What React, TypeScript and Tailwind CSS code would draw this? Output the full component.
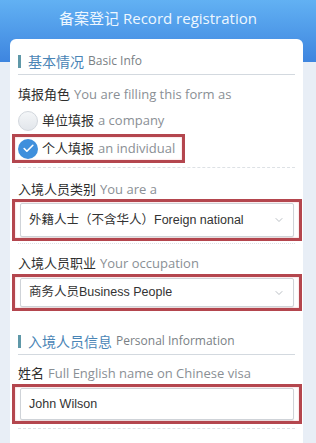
import { Check, ChevronDown } from "lucide-react";

const sans = { fontFamily: '"Open Sans", "Noto Sans CJK SC", sans-serif' };
const arial = { fontFamily: '"Liberation Sans", "Noto Sans CJK SC", sans-serif' };

function SectionHeader({ zh, en, className = "" }: { zh: string; en: string; className?: string }) {
  return (
    <div className={`flex items-end border-b border-[#d3d9df] pb-[2px] ${className}`}>
      <div className="flex h-[22px] items-center">
        <span className="mr-[7px] h-[13px] w-[3px] bg-[#5f98a8]" />
        <span className="text-[14px] text-[#4a85b6]">{zh}</span>
        <span className="ml-[4px] text-[12px] text-[#7a7f85]">{en}</span>
      </div>
    </div>
  );
}

function Label({ zh, en, className = "" }: { zh: string; en: string; className?: string }) {
  return (
    <div className={`flex h-[18px] items-center text-[13px] ${className}`}>
      <span className="text-[#2e2e2e]">{zh}</span>
      <span className="ml-[4px] text-[13px] text-[#8a8f95]">{en}</span>
    </div>
  );
}

function Highlight({ children, className = "" }: { children: React.ReactNode; className?: string }) {
  return (
    <div className={`border-[3px] border-[#b4464e] shadow-[inset_0_0_2px_#f0b8bb] ${className}`}>{children}</div>
  );
}

function Select({ value, className = "" }: { value: string; className?: string }) {
  return (
    <div
      className={`flex items-center justify-between rounded-[2px] border border-[#cfd3d8] bg-white pl-[8px] pr-[8px] shadow-[0_1px_1px_rgba(0,0,0,0.08)] ${className}`}
    >
      <span className="text-[12.5px] text-[#333]" style={arial}>
        {value}
      </span>
      <ChevronDown className="h-[12px] w-[12px] text-[#a3a9b0]" strokeWidth={1.5} />
    </div>
  );
}

function Dashed({ className = "" }: { className?: string }) {
  return <div className={`border-b border-dashed border-[#dde1e5] ${className}`} />;
}

export default function App() {
  return (
    <div className="relative h-[443px] w-[316px] overflow-hidden bg-[#e8eef6]" style={sans}>
      <div className="h-[62px] bg-gradient-to-b from-[#62b1f3] to-[#3e85df] pt-[7px] text-center">
        <h1 className="text-[15px] text-[#eef7ff]">备案登记 Record registration</h1>
      </div>

      <div className="-mt-[23px] ml-[10px] w-[293px] rounded-t-[6px] bg-white pb-4">
        <div className="px-[8px]">
          <SectionHeader zh="基本情况" en="Basic Info" className="h-[36px]" />

          <Label zh="填报角色" en="You are filling this form as" className="mt-[11px]" />

          <div className="mt-[6px] flex h-[22px] items-center">
            <span className="h-[20px] w-[20px] rounded-full border border-[#d2d7dd] bg-gradient-to-b from-[#f4f6f8] to-[#e2e6eb]" />
            <span className="ml-[4px] text-[13px] text-[#2e2e2e]">单位填报</span>
            <span className="ml-[4px] text-[13px] text-[#8a8f95]">a company</span>
          </div>

          <Highlight className="-ml-[6px] mt-[2px] flex h-[29px] w-[173px] items-center pl-[3px]">
            <span className="flex h-[20px] w-[20px] items-center justify-center rounded-full bg-[#3f8fdc]">
              <Check className="h-[13px] w-[13px] text-white" strokeWidth={3} />
            </span>
            <span className="ml-[4px] text-[13px] text-[#2e2e2e]">个人填报</span>
            <span className="ml-[4px] text-[13px] text-[#8a8f95]">an individual</span>
          </Highlight>

          <Dashed className="mt-[4px]" />

          <Label zh="入境人员类别" en="You are a" className="mt-[13px]" />

          <Highlight className="-mx-[6px] h-[42px] w-[290px] px-[5px] py-[1px]">
            <Select value="外籍人士（不含华人）Foreign national" className="h-[34px] w-[274px]" />
          </Highlight>

          <Dashed className="mt-[2px] border-dotted" />

          <Label zh="入境人员职业" en="Your occupation" className="mt-[11px]" />

          <Highlight className="-mx-[6px] mt-[1px] h-[37px] w-[290px] px-[5px] py-[1px]">
            <Select value="商务人员Business People" className="h-[29px] w-[274px]" />
          </Highlight>

          <SectionHeader zh="入境人员信息" en="Personal Information" className="h-[44px]" />

          <Label zh="姓名" en="Full English name on Chinese visa" className="mt-[10px]" />

          <Highlight className="-mx-[6px] mt-[1px] h-[40px] w-[290px] px-[5px] py-[1px]">
            <div className="flex h-[32px] w-[274px] items-center rounded-[2px] border border-[#cfd3d8] bg-white pl-[8px] shadow-[0_1px_1px_rgba(0,0,0,0.08)]">
              <span className="text-[12.5px] text-[#333]" style={arial}>
                John Wilson
              </span>
            </div>
          </Highlight>

          <Dashed className="mt-[4px]" />

          <Label zh="国籍" en="Nationality" className="mt-[12px]" />
        </div>
      </div>
    </div>
  );
}
